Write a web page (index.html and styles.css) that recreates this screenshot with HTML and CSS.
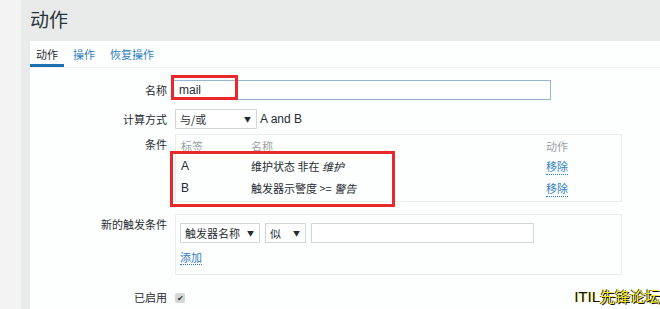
FILE: index.html
```html
<!DOCTYPE html>
<html lang="zh">

<head>
    <meta charset="UTF-8">
    <title>动作</title>
    <link rel="stylesheet" href="styles.css">
</head>

<body>
    <div class="page">
        <div class="side"></div>
        <div class="main">
            <h1 class="title">动作</h1>
            <div class="card">
                <div class="tabs">
                    <div class="tab active">动作</div>
                    <div class="tab">操作</div>
                    <div class="tab">恢复操作</div>
                </div>

                <div class="form">
                    <div class="row row-name">
                        <div class="lbl">名称</div>
                        <div class="field">
                            <div class="input name-input">mail</div>
                            <span class="mark mark-name"></span>
                        </div>
                    </div>

                    <div class="row row-calc">
                        <div class="lbl">计算方式</div>
                        <div class="field inline">
                            <div class="select calc-select">与/或<span class="arrow">▼</span></div>
                            <span class="latin">A and B</span>
                        </div>
                    </div>

                    <div class="row row-cond">
                        <div class="lbl">条件</div>
                        <div class="field">
                            <div class="box cond-box">
                                <div class="cond-row cond-head">
                                    <span class="c1">标签</span>
                                    <span class="c2">名称</span>
                                    <span class="c3">动作</span>
                                </div>
                                <div class="cond-row">
                                    <span class="c1 latin">A</span>
                                    <span class="c2">维护状态 非在 <i>维护</i></span>
                                    <span class="c3"><a class="link">移除</a></span>
                                </div>
                                <div class="cond-row last">
                                    <span class="c1 latin">B</span>
                                    <span class="c2">触发器示警度 &gt;= <i>警告</i></span>
                                    <span class="c3"><a class="link">移除</a></span>
                                </div>
                                <span class="mark mark-cond"></span>
                            </div>
                        </div>
                    </div>

                    <div class="row row-new">
                        <div class="lbl">新的触发条件</div>
                        <div class="field">
                            <div class="box new-box">
                                <div class="new-line">
                                    <div class="select type-select">触发器名称<span class="arrow">▼</span></div>
                                    <div class="select op-select">似<span class="arrow">▼</span></div>
                                    <div class="input value-input"></div>
                                </div>
                                <a class="link add-link">添加</a>
                            </div>
                        </div>
                    </div>

                    <div class="row row-enabled">
                        <div class="lbl">已启用</div>
                        <div class="field">
                            <span class="checkbox">✔</span>
                        </div>
                    </div>
                </div>
            </div>
        </div>
        <div class="watermark"><span class="wm-latin">ITIL</span>先锋论坛</div>
    </div>
</body>

</html>
```

FILE: styles.css
```css
* {
    margin: 0;
    padding: 0;
    box-sizing: border-box;
}

body {
    width: 660px;
    height: 309px;
    overflow: hidden;
    font-family: "Noto Sans CJK SC", "Liberation Sans", sans-serif;
    font-size: 12px;
    color: #1f2c33;
    background-color: #f2f2f2;
}

.page {
    position: relative;
    display: flex;
    height: 309px;
}

.side {
    width: 21px;
    background: #f3f3f3;
}

.main {
    flex: 1;
    display: flex;
    flex-direction: column;
    background: #e9eaea;
    padding-left: 9px;
}

.title {
    height: 41px;
    font-size: 19px;
    font-weight: normal;
    line-height: 37px;
    color: #2a3338;
}

.card {
    flex: 1;
    background: #fdfefe;
}

/* tabs */
.tabs {
    display: flex;
    gap: 3px;
    height: 27px;
    padding-top: 4px;
    border-bottom: 1px solid #f1f1f1;
}

.tab {
    padding: 0 6px;
    line-height: 19px;
    font-size: 11px;
    color: #2f7fbf;
    border-bottom: 3px solid transparent;
}

.tab.active {
    color: #1f2c33;
    border-bottom-color: #1c6fb0;
}

/* form rows */
.form {
    padding-top: 12px;
}

.row {
    display: flex;
    gap: 6px;
}

.lbl {
    width: 137px;
    text-align: right;
    line-height: 20px;
    font-size: 11px;
}

.field {
    position: relative;
}

.inline {
    display: flex;
    align-items: center;
    gap: 3px;
}

.latin {
    font-family: "Liberation Sans", Arial, sans-serif;
    font-size: 12px;
}

.row-calc {
    margin-top: 9px;
}

.row-cond {
    margin-top: 5px;
}

.row-new {
    margin-top: 12px;
}

.row-enabled {
    margin-top: 12px;
}

.input {
    height: 20px;
    border: 1px solid #d3d6d8;
    background: #fff;
    padding: 0 5px;
    line-height: 18px;
    font-family: "Liberation Sans", Arial, sans-serif;
    font-size: 12px;
}

.name-input {
    width: 378px;
    border-color: #97b5cf;
}

.select {
    position: relative;
    height: 20px;
    border: 1px solid #d3d6d8;
    background: #fff;
    padding: 0 4px;
    line-height: 18px;
    font-size: 11px;
}

.arrow {
    position: absolute;
    right: 5px;
    top: 0;
    font-size: 7px;
    color: #1f2c33;
}

.calc-select {
    width: 82px;
    margin-left: 2px;
}

/* condition boxes */
.box {
    position: relative;
    margin-left: 2px;
    width: 447px;
    border: 1px solid #ececec;
}

.cond-box {
    height: 68px;
    padding-top: 1px;
}

.cond-row {
    display: flex;
    height: 20px;
    line-height: 20px;
    font-size: 11px;
}

.cond-row.last {
    margin-top: 2px;
}

.cond-head {
    color: #9aa1a4;
}

.c1 {
    width: 75px;
    padding-left: 5px;
}

.c2 {
    width: 295px;
}

.c3 {
    flex: 1;
}

.link {
    color: #2f7fbf;
    border-bottom: 1px dotted #2f7fbf;
}

.new-box {
    height: 61px;
    padding: 8px 0 0 4px;
}

.new-line {
    display: flex;
    gap: 5px;
}

.type-select {
    width: 80px;
}

.op-select {
    width: 41px;
}

.value-input {
    width: 223px;
}

.add-link {
    display: inline-block;
    margin-top: 7px;
    font-size: 11px;
    line-height: 14px;
}

.checkbox {
    display: inline-block;
    width: 10px;
    height: 10px;
    margin: 3px 0 0 2px;
    background: #d6d6d6;
    border-radius: 2px;
    font-size: 8px;
    line-height: 10px;
    text-align: center;
    color: #333;
}

/* red highlight frames */
.mark {
    position: absolute;
    border: 3px solid #e8282b;
}

.mark-name {
    left: -2px;
    top: -5px;
    width: 67px;
    height: 25px;
}

.mark-cond {
    left: -6px;
    top: 16px;
    width: 225px;
    height: 56px;
}

.watermark {
    position: absolute;
    right: 0;
    bottom: 3px;
    font-size: 15px;
    color: #f5e616;
    text-shadow: 1px 1px 0 #111, -1px 0 0 #333;
}

.wm-latin {
    font-family: "Liberation Sans", Arial, sans-serif;
    color: #111;
    text-shadow: 1px 0 0 #f5e616;
}
```
